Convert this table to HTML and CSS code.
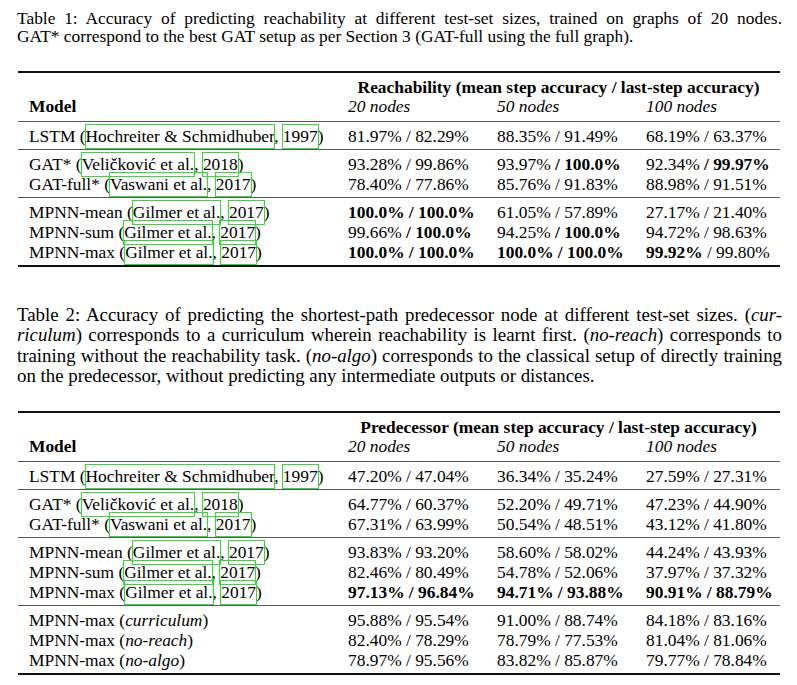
FILE: index.html
```html
<!DOCTYPE html>
<html lang="en">
<head>
<meta charset="utf-8">
<title>Tables</title>
<link rel="stylesheet" href="styles.css">
</head>
<body>
<main class="page">
  <p class="caption cap1">
    <span class="ln">Table 1: Accuracy of predicting reachability at different test-set sizes, trained on graphs of 20 nodes.</span>
    <span class="ln last">GAT* correspond to the best GAT setup as per Section 3 (GAT-full using the full graph).</span>
  </p>
  <table class="res t1">
    <colgroup><col class="c1"><col class="c2"><col class="c3"><col class="c4"></colgroup>
    <thead>
      <tr class="h1"><th></th><th colspan="3" class="span">Reachability (mean step accuracy / last-step accuracy)</th></tr>
      <tr class="h2"><th class="model">Model</th><th class="sz">20 nodes</th><th class="sz">50 nodes</th><th class="sz">100 nodes</th></tr>
    </thead>
    <tbody>
      <tr><td>LSTM (<span class="cite">Hochreiter &amp; Schmidhuber</span>, <span class="cite">1997</span>)</td><td>81.97% / 82.29%</td><td>88.35% / 91.49%</td><td>68.19% / 63.37%</td></tr>
    </tbody>
    <tbody>
      <tr><td>GAT* (<span class="cite">Veličković et al.</span>, <span class="cite">2018</span>)</td><td>93.28% / 99.86%</td><td>93.97% <b>/ 100.0%</b></td><td>92.34% <b>/ 99.97%</b></td></tr>
      <tr><td>GAT-full* (<span class="cite">Vaswani et al.</span>, <span class="cite">2017</span>)</td><td>78.40% / 77.86%</td><td>85.76% / 91.83%</td><td>88.98% / 91.51%</td></tr>
    </tbody>
    <tbody>
      <tr><td>MPNN-mean (<span class="cite">Gilmer et al.</span>, <span class="cite">2017</span>)</td><td><b>100.0% / 100.0%</b></td><td>61.05% / 57.89%</td><td>27.17% / 21.40%</td></tr>
      <tr><td>MPNN-sum (<span class="cite">Gilmer et al.</span>, <span class="cite">2017</span>)</td><td>99.66% <b>/ 100.0%</b></td><td>94.25% <b>/ 100.0%</b></td><td>94.72% / 98.63%</td></tr>
      <tr><td>MPNN-max (<span class="cite">Gilmer et al.</span>, <span class="cite">2017</span>)</td><td><b>100.0% / 100.0%</b></td><td><b>100.0% / 100.0%</b></td><td><b>99.92%</b> / 99.80%</td></tr>
    </tbody>
  </table>

  <p class="caption cap2">
    <span class="ln">Table 2: Accuracy of predicting the shortest-path predecessor node at different test-set sizes. (<i>cur-</i></span>
    <span class="ln"><i>riculum</i>) corresponds to a curriculum wherein reachability is learnt first. (<i>no-reach</i>) corresponds to</span>
    <span class="ln">training without the reachability task. (<i>no-algo</i>) corresponds to the classical setup of directly training</span>
    <span class="ln last">on the predecessor, without predicting any intermediate outputs or distances.</span>
  </p>
  <table class="res t2">
    <colgroup><col class="c1"><col class="c2"><col class="c3"><col class="c4"></colgroup>
    <thead>
      <tr class="h1"><th></th><th colspan="3" class="span">Predecessor (mean step accuracy / last-step accuracy)</th></tr>
      <tr class="h2"><th class="model">Model</th><th class="sz">20 nodes</th><th class="sz">50 nodes</th><th class="sz">100 nodes</th></tr>
    </thead>
    <tbody>
      <tr><td>LSTM (<span class="cite">Hochreiter &amp; Schmidhuber</span>, <span class="cite">1997</span>)</td><td>47.20% / 47.04%</td><td>36.34% / 35.24%</td><td>27.59% / 27.31%</td></tr>
    </tbody>
    <tbody>
      <tr><td>GAT* (<span class="cite">Veličković et al.</span>, <span class="cite">2018</span>)</td><td>64.77% / 60.37%</td><td>52.20% / 49.71%</td><td>47.23% / 44.90%</td></tr>
      <tr><td>GAT-full* (<span class="cite">Vaswani et al.</span>, <span class="cite">2017</span>)</td><td>67.31% / 63.99%</td><td>50.54% / 48.51%</td><td>43.12% / 41.80%</td></tr>
    </tbody>
    <tbody>
      <tr><td>MPNN-mean (<span class="cite">Gilmer et al.</span>, <span class="cite">2017</span>)</td><td>93.83% / 93.20%</td><td>58.60% / 58.02%</td><td>44.24% / 43.93%</td></tr>
      <tr><td>MPNN-sum (<span class="cite">Gilmer et al.</span>, <span class="cite">2017</span>)</td><td>82.46% / 80.49%</td><td>54.78% / 52.06%</td><td>37.97% / 37.32%</td></tr>
      <tr><td>MPNN-max (<span class="cite">Gilmer et al.</span>, <span class="cite">2017</span>)</td><td><b>97.13% / 96.84%</b></td><td><b>94.71% / 93.88%</b></td><td><b>90.91% / 88.79%</b></td></tr>
    </tbody>
    <tbody>
      <tr><td>MPNN-max (<i>curriculum</i>)</td><td>95.88% / 95.54%</td><td>91.00% / 88.74%</td><td>84.18% / 83.16%</td></tr>
      <tr><td>MPNN-max (<i>no-reach</i>)</td><td>82.40% / 78.29%</td><td>78.79% / 77.53%</td><td>81.04% / 81.06%</td></tr>
      <tr><td>MPNN-max (<i>no-algo</i>)</td><td>78.97% / 95.56%</td><td>83.82% / 85.87%</td><td>79.77% / 78.84%</td></tr>
    </tbody>
  </table>
</main>
</body>
</html>
```

FILE: styles.css
```css
html, body {
  margin: 0;
  padding: 0;
  background: #ffffff;
}

body {
  font-family: "Liberation Serif", "Times New Roman", serif;
  font-size: 17.4px;
  color: #000000;
}

.page {
  width: 765px;
  margin-left: 17px;
  padding-top: 9px;
}

.caption {
  margin: 0;
  line-height: 18.3px;
}

.caption .ln {
  display: block;
  white-space: nowrap;
  text-align: justify;
  text-align-last: justify;
}

.caption .ln.last {
  text-align: left;
  text-align-last: left;
}

.cap2 {
  margin-top: 38px;
  font-size: 18.85px;
  line-height: 20.5px;
}

.res {
  width: 762px;
  margin-left: 1px;
  table-layout: fixed;
  border-collapse: collapse;
  border-top: 2px solid #111111;
  border-bottom: 2px solid #111111;
}

.t1 {
  margin-top: 25px;
}

.t2 {
  margin-top: 24px;
}

.c1 { width: 319px; }
.c2 { width: 149px; }
.c3 { width: 149px; }
.c4 { width: 145px; }

.res th,
.res td {
  padding: 0 0 0 11px;
  text-align: left;
  white-space: nowrap;
  vertical-align: baseline;
}

.res thead th {
  line-height: 19px;
}

.res thead .h1 th {
  padding-top: 5px;
  font-weight: bold;
}

.res thead .h1 th.span {
  text-align: center;
  padding-right: 11px;
}

.res thead .h2 th {
  padding-bottom: 5px;
}

.res thead .h2 th.model {
  font-weight: bold;
}

.res thead .h2 th.sz {
  font-weight: normal;
  font-style: italic;
}

.res tbody {
  border-top: 1px solid #5a5a5a;
}

.res td {
  line-height: 20px;
}

.res tbody tr:first-child td {
  padding-top: 4px;
}

.res tbody tr:last-child td {
  padding-bottom: 3px;
}

.cite {
  padding: 1px 0 2px;
  outline: 1px solid #2ee02e;
}
```
